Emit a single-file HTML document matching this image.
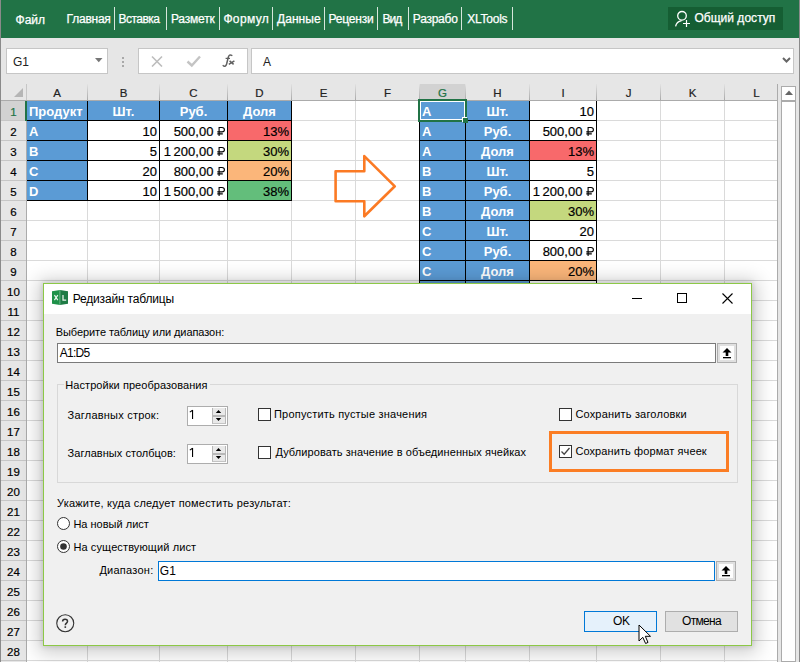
<!DOCTYPE html><html><head><meta charset="utf-8"><style>
*{margin:0;padding:0;box-sizing:border-box}
html,body{width:800px;height:662px;overflow:hidden;background:#e6e6e6;position:relative;font-family:"Liberation Sans", sans-serif}
.a{position:absolute}
.t{position:absolute;white-space:nowrap;line-height:1}
.s{-webkit-text-stroke:0.2px currentColor}
.c{position:absolute;white-space:nowrap;line-height:1;font-size:12px}
</style></head><body>
<div class="a" style="left:0px;top:0px;width:800px;height:38px;background:#217346"></div>
<div class="t" style="left:15.60px;top:14px;font-size:12px;color:#fff;font-weight:normal;letter-spacing:-0.067px;-webkit-text-stroke:0.25px #fff">Файл</div>
<div class="t" style="left:66.60px;top:13px;font-size:12px;color:#fff;font-weight:normal;letter-spacing:-0.233px;-webkit-text-stroke:0.25px #fff">Главная</div>
<div class="t" style="left:118.40px;top:13px;font-size:12px;color:#fff;font-weight:normal;letter-spacing:-0.500px;-webkit-text-stroke:0.25px #fff">Вставка</div>
<div class="t" style="left:170.90px;top:13px;font-size:12px;color:#fff;font-weight:normal;letter-spacing:-0.183px;-webkit-text-stroke:0.25px #fff">Разметк</div>
<div class="t" style="left:223.40px;top:13px;font-size:12px;color:#fff;font-weight:normal;letter-spacing:0.360px;-webkit-text-stroke:0.25px #fff">Формул</div>
<div class="t" style="left:277.00px;top:13px;font-size:12px;color:#fff;font-weight:normal;letter-spacing:0.040px;-webkit-text-stroke:0.25px #fff">Данные</div>
<div class="t" style="left:328.50px;top:13px;font-size:12px;color:#fff;font-weight:normal;letter-spacing:-0.208px;-webkit-text-stroke:0.25px #fff">Рецензи</div>
<div class="t" style="left:382.40px;top:13px;font-size:12px;color:#fff;font-weight:normal;letter-spacing:-0.875px;-webkit-text-stroke:0.25px #fff">Вид</div>
<div class="t" style="left:412.80px;top:13px;font-size:12px;color:#fff;font-weight:normal;letter-spacing:-0.250px;-webkit-text-stroke:0.25px #fff">Разрабо</div>
<div class="t" style="left:467.20px;top:13px;font-size:12px;color:#fff;font-weight:normal;letter-spacing:-0.233px;-webkit-text-stroke:0.25px #fff">XLTools</div>
<div class="a" style="left:114px;top:7px;width:1px;height:23px;background:#d7e6dc"></div>
<div class="a" style="left:166px;top:7px;width:1px;height:23px;background:#d7e6dc"></div>
<div class="a" style="left:219px;top:7px;width:1px;height:23px;background:#d7e6dc"></div>
<div class="a" style="left:272px;top:7px;width:1px;height:23px;background:#d7e6dc"></div>
<div class="a" style="left:324px;top:7px;width:1px;height:23px;background:#d7e6dc"></div>
<div class="a" style="left:377px;top:7px;width:1px;height:23px;background:#d7e6dc"></div>
<div class="a" style="left:408px;top:7px;width:1px;height:23px;background:#d7e6dc"></div>
<div class="a" style="left:461px;top:7px;width:1px;height:23px;background:#d7e6dc"></div>
<div class="a" style="left:512px;top:7px;width:1px;height:23px;background:#d7e6dc"></div>
<div class="a" style="left:668px;top:7px;width:115px;height:23px;background:#155e33"></div>
<div class="t" style="left:694.40px;top:12px;font-size:12px;color:#fff;font-weight:normal;letter-spacing:0.027px;-webkit-text-stroke:0.25px #fff">Общий доступ</div>
<svg class="a" style="left:673px;top:10px" width="20" height="18" viewBox="0 0 20 18"><circle cx="9" cy="5.8" r="4.3" fill="none" stroke="#fff" stroke-width="1.3"/><path d="M2.6 16.4 C3.2 13.2 5.5 11.2 8.6 10.6" fill="none" stroke="#fff" stroke-width="1.3"/><path d="M13.5 10 V17 M10 13.5 H17" stroke="#fff" stroke-width="1.2"/></svg>
<div class="a" style="left:0px;top:0px;width:1px;height:662px;background:#8a8a8a"></div>
<div class="a" style="left:799px;top:0px;width:1px;height:662px;background:#8a8a8a"></div>
<div class="a" style="left:6px;top:48px;width:102px;height:26px;background:#fff;border:1px solid #c6c6c6"></div>
<div class="t" style="left:13px;top:56px;font-size:12px;color:#222;font-weight:normal;letter-spacing:0px;">G1</div>
<svg class="a" style="left:95px;top:58px" width="8" height="5"><path d="M0 0 H7.5 L3.75 4.2 Z" fill="#777"/></svg>
<div class="a" style="left:122px;top:57px;width:2px;height:2px;background:#a8a8a8"></div>
<div class="a" style="left:122px;top:61px;width:2px;height:2px;background:#a8a8a8"></div>
<div class="a" style="left:122px;top:65px;width:2px;height:2px;background:#a8a8a8"></div>
<div class="a" style="left:138px;top:48px;width:110px;height:26px;background:#fff;border:1px solid #c6c6c6"></div>
<svg class="a" style="left:150px;top:55px" width="14" height="12"><path d="M2 1.5 L12 11.5 M12 1.5 L2 11.5" stroke="#bdbdbd" stroke-width="1.6"/></svg>
<svg class="a" style="left:186px;top:55px" width="16" height="13"><path d="M1.5 6.5 L5.8 10.5 L14 1.5" fill="none" stroke="#c4c4c4" stroke-width="2.4"/></svg>
<svg class="a" style="left:222px;top:53px" width="15" height="15"><path d="M1.2 12.6 C2.2 13.9 3.9 13.5 4.6 11 L6.3 4.2 C6.9 2 8 1.5 9.8 2.4" fill="none" stroke="#606060" stroke-width="1.5" stroke-linecap="round"/><path d="M3.6 5.4 H8" stroke="#606060" stroke-width="1.2"/><path d="M6.8 11.3 L12.4 7.8 M7.6 7.9 L11.6 11.4" stroke="#606060" stroke-width="1.5"/></svg>
<div class="a" style="left:251px;top:48px;width:543px;height:26px;background:#fff;border:1px solid #c6c6c6"></div>
<div class="t" style="left:263px;top:56px;font-size:12px;color:#222;font-weight:normal;letter-spacing:0px;">A</div>
<svg class="a" style="left:782px;top:57px" width="9" height="7"><path d="M1 1 L4.5 4.5 L8 1" fill="none" stroke="#666" stroke-width="2"/></svg>
<div class="a" style="left:1px;top:84px;width:777px;height:17px;background:#e6e6e6"></div>
<svg class="a" style="left:14px;top:88px" width="10" height="10"><path d="M9 0 V9 H0 Z" fill="#b5b5b5"/></svg>
<div class="a" style="left:420px;top:84px;width:45px;height:16px;background:#d2d2d2"></div>
<div class="a" style="left:87px;top:84px;width:1px;height:16px;background:linear-gradient(#e2e2e2,#a9a9a9)"></div>
<div class="t s" style="left:27px;top:88px;width:60px;text-align:center;font-size:11.5px;color:#222">A</div>
<div class="a" style="left:159px;top:84px;width:1px;height:16px;background:linear-gradient(#e2e2e2,#a9a9a9)"></div>
<div class="t s" style="left:88px;top:88px;width:71px;text-align:center;font-size:11.5px;color:#222">B</div>
<div class="a" style="left:227px;top:84px;width:1px;height:16px;background:linear-gradient(#e2e2e2,#a9a9a9)"></div>
<div class="t s" style="left:160px;top:88px;width:67px;text-align:center;font-size:11.5px;color:#222">C</div>
<div class="a" style="left:291px;top:84px;width:1px;height:16px;background:linear-gradient(#e2e2e2,#a9a9a9)"></div>
<div class="t s" style="left:228px;top:88px;width:63px;text-align:center;font-size:11.5px;color:#222">D</div>
<div class="a" style="left:355px;top:84px;width:1px;height:16px;background:linear-gradient(#e2e2e2,#a9a9a9)"></div>
<div class="t s" style="left:292px;top:88px;width:63px;text-align:center;font-size:11.5px;color:#222">E</div>
<div class="a" style="left:419px;top:84px;width:1px;height:16px;background:linear-gradient(#e2e2e2,#a9a9a9)"></div>
<div class="t s" style="left:356px;top:88px;width:63px;text-align:center;font-size:11.5px;color:#222">F</div>
<div class="a" style="left:465px;top:84px;width:1px;height:16px;background:linear-gradient(#e2e2e2,#a9a9a9)"></div>
<div class="t s" style="left:420px;top:88px;width:45px;text-align:center;font-size:11.5px;color:#217346">G</div>
<div class="a" style="left:529px;top:84px;width:1px;height:16px;background:linear-gradient(#e2e2e2,#a9a9a9)"></div>
<div class="t s" style="left:466px;top:88px;width:63px;text-align:center;font-size:11.5px;color:#222">H</div>
<div class="a" style="left:596px;top:84px;width:1px;height:16px;background:linear-gradient(#e2e2e2,#a9a9a9)"></div>
<div class="t s" style="left:530px;top:88px;width:66px;text-align:center;font-size:11.5px;color:#222">I</div>
<div class="a" style="left:660px;top:84px;width:1px;height:16px;background:linear-gradient(#e2e2e2,#a9a9a9)"></div>
<div class="t s" style="left:597px;top:88px;width:63px;text-align:center;font-size:11.5px;color:#222">J</div>
<div class="a" style="left:724px;top:84px;width:1px;height:16px;background:linear-gradient(#e2e2e2,#a9a9a9)"></div>
<div class="t s" style="left:661px;top:88px;width:63px;text-align:center;font-size:11.5px;color:#222">K</div>
<div class="a" style="left:777px;top:84px;width:1px;height:16px;background:linear-gradient(#e2e2e2,#a9a9a9)"></div>
<div class="t s" style="left:725px;top:88px;width:63px;text-align:center;font-size:11.5px;color:#222">L</div>
<div class="a" style="left:26px;top:84px;width:1px;height:16px;background:#c6c6c6"></div>
<div class="a" style="left:1px;top:100px;width:777px;height:1px;background:#ababab"></div>
<div class="a" style="left:27px;top:101px;width:750px;height:561px;background:#fff"></div>
<div class="a" style="left:27px;top:120px;width:750px;height:1px;background:#dadada"></div>
<div class="a" style="left:27px;top:140px;width:750px;height:1px;background:#dadada"></div>
<div class="a" style="left:27px;top:160px;width:750px;height:1px;background:#dadada"></div>
<div class="a" style="left:27px;top:180px;width:750px;height:1px;background:#dadada"></div>
<div class="a" style="left:27px;top:200px;width:750px;height:1px;background:#dadada"></div>
<div class="a" style="left:27px;top:220px;width:750px;height:1px;background:#dadada"></div>
<div class="a" style="left:27px;top:240px;width:750px;height:1px;background:#dadada"></div>
<div class="a" style="left:27px;top:260px;width:750px;height:1px;background:#dadada"></div>
<div class="a" style="left:27px;top:280px;width:750px;height:1px;background:#dadada"></div>
<div class="a" style="left:27px;top:300px;width:750px;height:1px;background:#dadada"></div>
<div class="a" style="left:27px;top:320px;width:750px;height:1px;background:#dadada"></div>
<div class="a" style="left:27px;top:340px;width:750px;height:1px;background:#dadada"></div>
<div class="a" style="left:27px;top:360px;width:750px;height:1px;background:#dadada"></div>
<div class="a" style="left:27px;top:380px;width:750px;height:1px;background:#dadada"></div>
<div class="a" style="left:27px;top:400px;width:750px;height:1px;background:#dadada"></div>
<div class="a" style="left:27px;top:420px;width:750px;height:1px;background:#dadada"></div>
<div class="a" style="left:27px;top:440px;width:750px;height:1px;background:#dadada"></div>
<div class="a" style="left:27px;top:460px;width:750px;height:1px;background:#dadada"></div>
<div class="a" style="left:27px;top:480px;width:750px;height:1px;background:#dadada"></div>
<div class="a" style="left:27px;top:500px;width:750px;height:1px;background:#dadada"></div>
<div class="a" style="left:27px;top:520px;width:750px;height:1px;background:#dadada"></div>
<div class="a" style="left:27px;top:540px;width:750px;height:1px;background:#dadada"></div>
<div class="a" style="left:27px;top:560px;width:750px;height:1px;background:#dadada"></div>
<div class="a" style="left:27px;top:580px;width:750px;height:1px;background:#dadada"></div>
<div class="a" style="left:27px;top:600px;width:750px;height:1px;background:#dadada"></div>
<div class="a" style="left:27px;top:620px;width:750px;height:1px;background:#dadada"></div>
<div class="a" style="left:27px;top:640px;width:750px;height:1px;background:#dadada"></div>
<div class="a" style="left:27px;top:660px;width:750px;height:1px;background:#dadada"></div>
<div class="a" style="left:87px;top:101px;width:1px;height:561px;background:#dadada"></div>
<div class="a" style="left:159px;top:101px;width:1px;height:561px;background:#dadada"></div>
<div class="a" style="left:227px;top:101px;width:1px;height:561px;background:#dadada"></div>
<div class="a" style="left:291px;top:101px;width:1px;height:561px;background:#dadada"></div>
<div class="a" style="left:355px;top:101px;width:1px;height:561px;background:#dadada"></div>
<div class="a" style="left:419px;top:101px;width:1px;height:561px;background:#dadada"></div>
<div class="a" style="left:465px;top:101px;width:1px;height:561px;background:#dadada"></div>
<div class="a" style="left:529px;top:101px;width:1px;height:561px;background:#dadada"></div>
<div class="a" style="left:596px;top:101px;width:1px;height:561px;background:#dadada"></div>
<div class="a" style="left:660px;top:101px;width:1px;height:561px;background:#dadada"></div>
<div class="a" style="left:724px;top:101px;width:1px;height:561px;background:#dadada"></div>
<div class="a" style="left:777px;top:84px;width:1px;height:578px;background:#ababab"></div>
<div class="a" style="left:1px;top:101px;width:25px;height:19px;background:#d2d2d2"></div>
<div class="a" style="left:1px;top:120px;width:25px;height:1px;background:#c6c6c6"></div>
<div class="t s" style="left:1px;top:107px;width:25px;text-align:center;font-size:11.5px;color:#217346">1</div>
<div class="a" style="left:1px;top:121px;width:25px;height:19px;background:#e6e6e6"></div>
<div class="a" style="left:1px;top:140px;width:25px;height:1px;background:#c6c6c6"></div>
<div class="t s" style="left:1px;top:127px;width:25px;text-align:center;font-size:11.5px;color:#000">2</div>
<div class="a" style="left:1px;top:141px;width:25px;height:19px;background:#e6e6e6"></div>
<div class="a" style="left:1px;top:160px;width:25px;height:1px;background:#c6c6c6"></div>
<div class="t s" style="left:1px;top:147px;width:25px;text-align:center;font-size:11.5px;color:#000">3</div>
<div class="a" style="left:1px;top:161px;width:25px;height:19px;background:#e6e6e6"></div>
<div class="a" style="left:1px;top:180px;width:25px;height:1px;background:#c6c6c6"></div>
<div class="t s" style="left:1px;top:167px;width:25px;text-align:center;font-size:11.5px;color:#000">4</div>
<div class="a" style="left:1px;top:181px;width:25px;height:19px;background:#e6e6e6"></div>
<div class="a" style="left:1px;top:200px;width:25px;height:1px;background:#c6c6c6"></div>
<div class="t s" style="left:1px;top:187px;width:25px;text-align:center;font-size:11.5px;color:#000">5</div>
<div class="a" style="left:1px;top:201px;width:25px;height:19px;background:#e6e6e6"></div>
<div class="a" style="left:1px;top:220px;width:25px;height:1px;background:#c6c6c6"></div>
<div class="t s" style="left:1px;top:207px;width:25px;text-align:center;font-size:11.5px;color:#000">6</div>
<div class="a" style="left:1px;top:221px;width:25px;height:19px;background:#e6e6e6"></div>
<div class="a" style="left:1px;top:240px;width:25px;height:1px;background:#c6c6c6"></div>
<div class="t s" style="left:1px;top:227px;width:25px;text-align:center;font-size:11.5px;color:#000">7</div>
<div class="a" style="left:1px;top:241px;width:25px;height:19px;background:#e6e6e6"></div>
<div class="a" style="left:1px;top:260px;width:25px;height:1px;background:#c6c6c6"></div>
<div class="t s" style="left:1px;top:247px;width:25px;text-align:center;font-size:11.5px;color:#000">8</div>
<div class="a" style="left:1px;top:261px;width:25px;height:19px;background:#e6e6e6"></div>
<div class="a" style="left:1px;top:280px;width:25px;height:1px;background:#c6c6c6"></div>
<div class="t s" style="left:1px;top:267px;width:25px;text-align:center;font-size:11.5px;color:#000">9</div>
<div class="a" style="left:1px;top:281px;width:25px;height:19px;background:#e6e6e6"></div>
<div class="a" style="left:1px;top:300px;width:25px;height:1px;background:#c6c6c6"></div>
<div class="t s" style="left:1px;top:287px;width:25px;text-align:center;font-size:11.5px;color:#000">10</div>
<div class="a" style="left:1px;top:301px;width:25px;height:19px;background:#e6e6e6"></div>
<div class="a" style="left:1px;top:320px;width:25px;height:1px;background:#c6c6c6"></div>
<div class="t s" style="left:1px;top:307px;width:25px;text-align:center;font-size:11.5px;color:#000">11</div>
<div class="a" style="left:1px;top:321px;width:25px;height:19px;background:#e6e6e6"></div>
<div class="a" style="left:1px;top:340px;width:25px;height:1px;background:#c6c6c6"></div>
<div class="t s" style="left:1px;top:327px;width:25px;text-align:center;font-size:11.5px;color:#000">12</div>
<div class="a" style="left:1px;top:341px;width:25px;height:19px;background:#e6e6e6"></div>
<div class="a" style="left:1px;top:360px;width:25px;height:1px;background:#c6c6c6"></div>
<div class="t s" style="left:1px;top:347px;width:25px;text-align:center;font-size:11.5px;color:#000">13</div>
<div class="a" style="left:1px;top:361px;width:25px;height:19px;background:#e6e6e6"></div>
<div class="a" style="left:1px;top:380px;width:25px;height:1px;background:#c6c6c6"></div>
<div class="t s" style="left:1px;top:367px;width:25px;text-align:center;font-size:11.5px;color:#000">14</div>
<div class="a" style="left:1px;top:381px;width:25px;height:19px;background:#e6e6e6"></div>
<div class="a" style="left:1px;top:400px;width:25px;height:1px;background:#c6c6c6"></div>
<div class="t s" style="left:1px;top:387px;width:25px;text-align:center;font-size:11.5px;color:#000">15</div>
<div class="a" style="left:1px;top:401px;width:25px;height:19px;background:#e6e6e6"></div>
<div class="a" style="left:1px;top:420px;width:25px;height:1px;background:#c6c6c6"></div>
<div class="t s" style="left:1px;top:407px;width:25px;text-align:center;font-size:11.5px;color:#000">16</div>
<div class="a" style="left:1px;top:421px;width:25px;height:19px;background:#e6e6e6"></div>
<div class="a" style="left:1px;top:440px;width:25px;height:1px;background:#c6c6c6"></div>
<div class="t s" style="left:1px;top:427px;width:25px;text-align:center;font-size:11.5px;color:#000">17</div>
<div class="a" style="left:1px;top:441px;width:25px;height:19px;background:#e6e6e6"></div>
<div class="a" style="left:1px;top:460px;width:25px;height:1px;background:#c6c6c6"></div>
<div class="t s" style="left:1px;top:447px;width:25px;text-align:center;font-size:11.5px;color:#000">18</div>
<div class="a" style="left:1px;top:461px;width:25px;height:19px;background:#e6e6e6"></div>
<div class="a" style="left:1px;top:480px;width:25px;height:1px;background:#c6c6c6"></div>
<div class="t s" style="left:1px;top:467px;width:25px;text-align:center;font-size:11.5px;color:#000">19</div>
<div class="a" style="left:1px;top:481px;width:25px;height:19px;background:#e6e6e6"></div>
<div class="a" style="left:1px;top:500px;width:25px;height:1px;background:#c6c6c6"></div>
<div class="t s" style="left:1px;top:487px;width:25px;text-align:center;font-size:11.5px;color:#000">20</div>
<div class="a" style="left:1px;top:501px;width:25px;height:19px;background:#e6e6e6"></div>
<div class="a" style="left:1px;top:520px;width:25px;height:1px;background:#c6c6c6"></div>
<div class="t s" style="left:1px;top:507px;width:25px;text-align:center;font-size:11.5px;color:#000">21</div>
<div class="a" style="left:1px;top:521px;width:25px;height:19px;background:#e6e6e6"></div>
<div class="a" style="left:1px;top:540px;width:25px;height:1px;background:#c6c6c6"></div>
<div class="t s" style="left:1px;top:527px;width:25px;text-align:center;font-size:11.5px;color:#000">22</div>
<div class="a" style="left:1px;top:541px;width:25px;height:19px;background:#e6e6e6"></div>
<div class="a" style="left:1px;top:560px;width:25px;height:1px;background:#c6c6c6"></div>
<div class="t s" style="left:1px;top:547px;width:25px;text-align:center;font-size:11.5px;color:#000">23</div>
<div class="a" style="left:1px;top:561px;width:25px;height:19px;background:#e6e6e6"></div>
<div class="a" style="left:1px;top:580px;width:25px;height:1px;background:#c6c6c6"></div>
<div class="t s" style="left:1px;top:567px;width:25px;text-align:center;font-size:11.5px;color:#000">24</div>
<div class="a" style="left:1px;top:581px;width:25px;height:19px;background:#e6e6e6"></div>
<div class="a" style="left:1px;top:600px;width:25px;height:1px;background:#c6c6c6"></div>
<div class="t s" style="left:1px;top:587px;width:25px;text-align:center;font-size:11.5px;color:#000">25</div>
<div class="a" style="left:1px;top:601px;width:25px;height:19px;background:#e6e6e6"></div>
<div class="a" style="left:1px;top:620px;width:25px;height:1px;background:#c6c6c6"></div>
<div class="t s" style="left:1px;top:607px;width:25px;text-align:center;font-size:11.5px;color:#000">26</div>
<div class="a" style="left:1px;top:621px;width:25px;height:19px;background:#e6e6e6"></div>
<div class="a" style="left:1px;top:640px;width:25px;height:1px;background:#c6c6c6"></div>
<div class="t s" style="left:1px;top:627px;width:25px;text-align:center;font-size:11.5px;color:#000">27</div>
<div class="a" style="left:1px;top:641px;width:25px;height:19px;background:#e6e6e6"></div>
<div class="a" style="left:1px;top:660px;width:25px;height:1px;background:#c6c6c6"></div>
<div class="t s" style="left:1px;top:647px;width:25px;text-align:center;font-size:11.5px;color:#000">28</div>
<div class="a" style="left:26px;top:101px;width:1px;height:561px;background:#ababab"></div>
<div class="a" style="left:25px;top:100px;width:2px;height:21px;background:#217346"></div>
<div class="a" style="left:27px;top:101px;width:60px;height:19px;background:#5b9bd5"></div>
<div class="t" style="left:29px;top:105px;font-size:13px;font-weight:bold;color:#fff">Продукт</div>
<div class="a" style="left:88px;top:101px;width:71px;height:19px;background:#5b9bd5"></div>
<div class="t" style="left:88px;width:71px;text-align:center;top:105px;font-size:13px;font-weight:bold;color:#fff">Шт.</div>
<div class="a" style="left:160px;top:101px;width:67px;height:19px;background:#5b9bd5"></div>
<div class="t" style="left:160px;width:67px;text-align:center;top:105px;font-size:13px;font-weight:bold;color:#fff">Руб.</div>
<div class="a" style="left:228px;top:101px;width:63px;height:19px;background:#5b9bd5"></div>
<div class="t" style="left:228px;width:63px;text-align:center;top:105px;font-size:13px;font-weight:bold;color:#fff">Доля</div>
<div class="a" style="left:27px;top:121px;width:60px;height:19px;background:#5b9bd5"></div>
<div class="t" style="left:29px;top:125px;font-size:13px;font-weight:bold;color:#fff">A</div>
<div class="t s" style="left:88px;width:69px;text-align:right;top:125px;font-size:13px;font-weight:normal;color:#000">10</div>
<div class="t s" style="left:160px;width:65px;text-align:right;top:125px;font-size:13px;font-weight:normal;color:#000">500,00 <svg width="8" height="9" viewBox="0 0 8 9" style="margin-left:0px"><path d="M2.1 0 V9 M2.1 0.55 H5 C6.6 0.55 7.4 1.5 7.4 2.7 C7.4 3.9 6.6 4.85 5 4.85 H0.3 M0.3 6.9 H5.8" fill="none" stroke="#000" stroke-width="1.1"/></svg></div>
<div class="a" style="left:228px;top:121px;width:63px;height:19px;background:#f8696b"></div>
<div class="t s" style="left:228px;width:61px;text-align:right;top:125px;font-size:13px;font-weight:normal;color:#000">13%</div>
<div class="a" style="left:27px;top:141px;width:60px;height:19px;background:#5b9bd5"></div>
<div class="t" style="left:29px;top:145px;font-size:13px;font-weight:bold;color:#fff">B</div>
<div class="t s" style="left:88px;width:69px;text-align:right;top:145px;font-size:13px;font-weight:normal;color:#000">5</div>
<div class="t s" style="left:160px;width:65px;text-align:right;top:145px;font-size:13px;font-weight:normal;color:#000">1&#8201;200,00 <svg width="8" height="9" viewBox="0 0 8 9" style="margin-left:0px"><path d="M2.1 0 V9 M2.1 0.55 H5 C6.6 0.55 7.4 1.5 7.4 2.7 C7.4 3.9 6.6 4.85 5 4.85 H0.3 M0.3 6.9 H5.8" fill="none" stroke="#000" stroke-width="1.1"/></svg></div>
<div class="a" style="left:228px;top:141px;width:63px;height:19px;background:#c4d87e"></div>
<div class="t s" style="left:228px;width:61px;text-align:right;top:145px;font-size:13px;font-weight:normal;color:#000">30%</div>
<div class="a" style="left:27px;top:161px;width:60px;height:19px;background:#5b9bd5"></div>
<div class="t" style="left:29px;top:165px;font-size:13px;font-weight:bold;color:#fff">C</div>
<div class="t s" style="left:88px;width:69px;text-align:right;top:165px;font-size:13px;font-weight:normal;color:#000">20</div>
<div class="t s" style="left:160px;width:65px;text-align:right;top:165px;font-size:13px;font-weight:normal;color:#000">800,00 <svg width="8" height="9" viewBox="0 0 8 9" style="margin-left:0px"><path d="M2.1 0 V9 M2.1 0.55 H5 C6.6 0.55 7.4 1.5 7.4 2.7 C7.4 3.9 6.6 4.85 5 4.85 H0.3 M0.3 6.9 H5.8" fill="none" stroke="#000" stroke-width="1.1"/></svg></div>
<div class="a" style="left:228px;top:161px;width:63px;height:19px;background:#fbb67a"></div>
<div class="t s" style="left:228px;width:61px;text-align:right;top:165px;font-size:13px;font-weight:normal;color:#000">20%</div>
<div class="a" style="left:27px;top:181px;width:60px;height:19px;background:#5b9bd5"></div>
<div class="t" style="left:29px;top:185px;font-size:13px;font-weight:bold;color:#fff">D</div>
<div class="t s" style="left:88px;width:69px;text-align:right;top:185px;font-size:13px;font-weight:normal;color:#000">10</div>
<div class="t s" style="left:160px;width:65px;text-align:right;top:185px;font-size:13px;font-weight:normal;color:#000">1&#8201;500,00 <svg width="8" height="9" viewBox="0 0 8 9" style="margin-left:0px"><path d="M2.1 0 V9 M2.1 0.55 H5 C6.6 0.55 7.4 1.5 7.4 2.7 C7.4 3.9 6.6 4.85 5 4.85 H0.3 M0.3 6.9 H5.8" fill="none" stroke="#000" stroke-width="1.1"/></svg></div>
<div class="a" style="left:228px;top:181px;width:63px;height:19px;background:#63be7b"></div>
<div class="t s" style="left:228px;width:61px;text-align:right;top:185px;font-size:13px;font-weight:normal;color:#000">38%</div>
<div class="a" style="left:26px;top:100px;width:266px;height:1px;background:#000"></div>
<div class="a" style="left:26px;top:120px;width:266px;height:1px;background:#000"></div>
<div class="a" style="left:26px;top:140px;width:266px;height:1px;background:#000"></div>
<div class="a" style="left:26px;top:160px;width:266px;height:1px;background:#000"></div>
<div class="a" style="left:26px;top:180px;width:266px;height:1px;background:#000"></div>
<div class="a" style="left:26px;top:200px;width:266px;height:1px;background:#000"></div>
<div class="a" style="left:26px;top:100px;width:1px;height:101px;background:#000"></div>
<div class="a" style="left:87px;top:100px;width:1px;height:101px;background:#000"></div>
<div class="a" style="left:159px;top:100px;width:1px;height:101px;background:#000"></div>
<div class="a" style="left:227px;top:100px;width:1px;height:101px;background:#000"></div>
<div class="a" style="left:291px;top:100px;width:1px;height:101px;background:#000"></div>
<div class="a" style="left:420px;top:101px;width:45px;height:19px;background:#5b9bd5"></div>
<div class="t" style="left:422px;top:105px;font-size:13px;font-weight:bold;color:#fff">A</div>
<div class="a" style="left:466px;top:101px;width:63px;height:19px;background:#5b9bd5"></div>
<div class="t" style="left:466px;width:63px;text-align:center;top:105px;font-size:13px;font-weight:bold;color:#fff">Шт.</div>
<div class="t s" style="left:530px;width:64px;text-align:right;top:105px;font-size:13px;font-weight:normal;color:#000">10</div>
<div class="a" style="left:420px;top:121px;width:45px;height:19px;background:#5b9bd5"></div>
<div class="t" style="left:422px;top:125px;font-size:13px;font-weight:bold;color:#fff">A</div>
<div class="a" style="left:466px;top:121px;width:63px;height:19px;background:#5b9bd5"></div>
<div class="t" style="left:466px;width:63px;text-align:center;top:125px;font-size:13px;font-weight:bold;color:#fff">Руб.</div>
<div class="t s" style="left:530px;width:64px;text-align:right;top:125px;font-size:13px;font-weight:normal;color:#000">500,00 <svg width="8" height="9" viewBox="0 0 8 9" style="margin-left:0px"><path d="M2.1 0 V9 M2.1 0.55 H5 C6.6 0.55 7.4 1.5 7.4 2.7 C7.4 3.9 6.6 4.85 5 4.85 H0.3 M0.3 6.9 H5.8" fill="none" stroke="#000" stroke-width="1.1"/></svg></div>
<div class="a" style="left:420px;top:141px;width:45px;height:19px;background:#5b9bd5"></div>
<div class="t" style="left:422px;top:145px;font-size:13px;font-weight:bold;color:#fff">A</div>
<div class="a" style="left:466px;top:141px;width:63px;height:19px;background:#5b9bd5"></div>
<div class="t" style="left:466px;width:63px;text-align:center;top:145px;font-size:13px;font-weight:bold;color:#fff">Доля</div>
<div class="a" style="left:530px;top:141px;width:66px;height:19px;background:#f8696b"></div>
<div class="t s" style="left:530px;width:64px;text-align:right;top:145px;font-size:13px;font-weight:normal;color:#000">13%</div>
<div class="a" style="left:420px;top:161px;width:45px;height:19px;background:#5b9bd5"></div>
<div class="t" style="left:422px;top:165px;font-size:13px;font-weight:bold;color:#fff">B</div>
<div class="a" style="left:466px;top:161px;width:63px;height:19px;background:#5b9bd5"></div>
<div class="t" style="left:466px;width:63px;text-align:center;top:165px;font-size:13px;font-weight:bold;color:#fff">Шт.</div>
<div class="t s" style="left:530px;width:64px;text-align:right;top:165px;font-size:13px;font-weight:normal;color:#000">5</div>
<div class="a" style="left:420px;top:181px;width:45px;height:19px;background:#5b9bd5"></div>
<div class="t" style="left:422px;top:185px;font-size:13px;font-weight:bold;color:#fff">B</div>
<div class="a" style="left:466px;top:181px;width:63px;height:19px;background:#5b9bd5"></div>
<div class="t" style="left:466px;width:63px;text-align:center;top:185px;font-size:13px;font-weight:bold;color:#fff">Руб.</div>
<div class="t s" style="left:530px;width:64px;text-align:right;top:185px;font-size:13px;font-weight:normal;color:#000">1&#8201;200,00 <svg width="8" height="9" viewBox="0 0 8 9" style="margin-left:0px"><path d="M2.1 0 V9 M2.1 0.55 H5 C6.6 0.55 7.4 1.5 7.4 2.7 C7.4 3.9 6.6 4.85 5 4.85 H0.3 M0.3 6.9 H5.8" fill="none" stroke="#000" stroke-width="1.1"/></svg></div>
<div class="a" style="left:420px;top:201px;width:45px;height:19px;background:#5b9bd5"></div>
<div class="t" style="left:422px;top:205px;font-size:13px;font-weight:bold;color:#fff">B</div>
<div class="a" style="left:466px;top:201px;width:63px;height:19px;background:#5b9bd5"></div>
<div class="t" style="left:466px;width:63px;text-align:center;top:205px;font-size:13px;font-weight:bold;color:#fff">Доля</div>
<div class="a" style="left:530px;top:201px;width:66px;height:19px;background:#c4d87e"></div>
<div class="t s" style="left:530px;width:64px;text-align:right;top:205px;font-size:13px;font-weight:normal;color:#000">30%</div>
<div class="a" style="left:420px;top:221px;width:45px;height:19px;background:#5b9bd5"></div>
<div class="t" style="left:422px;top:225px;font-size:13px;font-weight:bold;color:#fff">C</div>
<div class="a" style="left:466px;top:221px;width:63px;height:19px;background:#5b9bd5"></div>
<div class="t" style="left:466px;width:63px;text-align:center;top:225px;font-size:13px;font-weight:bold;color:#fff">Шт.</div>
<div class="t s" style="left:530px;width:64px;text-align:right;top:225px;font-size:13px;font-weight:normal;color:#000">20</div>
<div class="a" style="left:420px;top:241px;width:45px;height:19px;background:#5b9bd5"></div>
<div class="t" style="left:422px;top:245px;font-size:13px;font-weight:bold;color:#fff">C</div>
<div class="a" style="left:466px;top:241px;width:63px;height:19px;background:#5b9bd5"></div>
<div class="t" style="left:466px;width:63px;text-align:center;top:245px;font-size:13px;font-weight:bold;color:#fff">Руб.</div>
<div class="t s" style="left:530px;width:64px;text-align:right;top:245px;font-size:13px;font-weight:normal;color:#000">800,00 <svg width="8" height="9" viewBox="0 0 8 9" style="margin-left:0px"><path d="M2.1 0 V9 M2.1 0.55 H5 C6.6 0.55 7.4 1.5 7.4 2.7 C7.4 3.9 6.6 4.85 5 4.85 H0.3 M0.3 6.9 H5.8" fill="none" stroke="#000" stroke-width="1.1"/></svg></div>
<div class="a" style="left:420px;top:261px;width:45px;height:19px;background:#5b9bd5"></div>
<div class="t" style="left:422px;top:265px;font-size:13px;font-weight:bold;color:#fff">C</div>
<div class="a" style="left:466px;top:261px;width:63px;height:19px;background:#5b9bd5"></div>
<div class="t" style="left:466px;width:63px;text-align:center;top:265px;font-size:13px;font-weight:bold;color:#fff">Доля</div>
<div class="a" style="left:530px;top:261px;width:66px;height:19px;background:#fbb67a"></div>
<div class="t s" style="left:530px;width:64px;text-align:right;top:265px;font-size:13px;font-weight:normal;color:#000">20%</div>
<div class="a" style="left:420px;top:281px;width:45px;height:19px;background:#5b9bd5"></div>
<div class="t" style="left:422px;top:285px;font-size:13px;font-weight:bold;color:#fff">D</div>
<div class="a" style="left:466px;top:281px;width:63px;height:19px;background:#5b9bd5"></div>
<div class="t" style="left:466px;width:63px;text-align:center;top:285px;font-size:13px;font-weight:bold;color:#fff">Шт.</div>
<div class="t s" style="left:530px;width:64px;text-align:right;top:285px;font-size:13px;font-weight:normal;color:#000">10</div>
<div class="a" style="left:419px;top:100px;width:178px;height:1px;background:#000"></div>
<div class="a" style="left:419px;top:120px;width:178px;height:1px;background:#000"></div>
<div class="a" style="left:419px;top:140px;width:178px;height:1px;background:#000"></div>
<div class="a" style="left:419px;top:160px;width:178px;height:1px;background:#000"></div>
<div class="a" style="left:419px;top:180px;width:178px;height:1px;background:#000"></div>
<div class="a" style="left:419px;top:200px;width:178px;height:1px;background:#000"></div>
<div class="a" style="left:419px;top:220px;width:178px;height:1px;background:#000"></div>
<div class="a" style="left:419px;top:240px;width:178px;height:1px;background:#000"></div>
<div class="a" style="left:419px;top:260px;width:178px;height:1px;background:#000"></div>
<div class="a" style="left:419px;top:280px;width:178px;height:1px;background:#000"></div>
<div class="a" style="left:419px;top:300px;width:178px;height:1px;background:#000"></div>
<div class="a" style="left:419px;top:100px;width:1px;height:201px;background:#000"></div>
<div class="a" style="left:465px;top:100px;width:1px;height:201px;background:#000"></div>
<div class="a" style="left:529px;top:100px;width:1px;height:201px;background:#000"></div>
<div class="a" style="left:596px;top:100px;width:1px;height:201px;background:#000"></div>
<div class="a" style="left:26px;top:101px;width:1px;height:561px;background:#ababab"></div>
<div class="a" style="left:25px;top:100px;width:2px;height:21px;background:#217346"></div>
<div class="a" style="left:1px;top:100px;width:777px;height:1px;background:#ababab"></div>
<div class="a" style="left:418px;top:99px;width:49px;height:23px;border:2px solid #217346"></div>
<div class="a" style="left:420px;top:101px;width:45px;height:19px;border:1px solid #fff"></div>
<div class="a" style="left:463px;top:118px;width:5px;height:5px;background:#217346;box-shadow:-1px -1px 0 #fff"></div>
<svg class="a" style="left:0;top:0" width="800" height="662"><path d="M335.6 171.3 H364.3 V156.1 L394.8 186.3 L364.3 216.3 V201.2 H335.6 Z" fill="none" stroke="#fb7a24" stroke-width="2.6" stroke-linejoin="round"/></svg>
<div class="a" style="left:778px;top:84px;width:21px;height:578px;background:#e6e6e6"></div>
<div class="a" style="left:781px;top:86px;width:15px;height:576px;background:#fff;border:1px solid #ababab"></div>
<div class="a" style="left:781px;top:100px;width:15px;height:2px;background:#ababab"></div>
<svg class="a" style="left:785px;top:90px" width="8" height="5"><path d="M0 5 L4 0.5 L8 5 Z" fill="#666"/></svg>
<div class="a" style="left:43px;top:283px;width:709px;height:363px;box-shadow:0 0 5px 1px rgba(0,0,0,0.12), 0 2px 18px 5px rgba(0,0,0,0.2)"></div>
<div class="a" style="left:43px;top:283px;width:709px;height:363px;background:#f0f0f0;border:1px solid #8cc846"></div>
<div class="a" style="left:44px;top:284px;width:707px;height:30px;background:#fff"></div>
<svg class="a" style="left:52px;top:290px" width="16" height="15" viewBox="0 0 16 15"><path d="M0 1.2 L8 0 V15 L0 13.8 Z" fill="#1f9149"/><path d="M8 0 L16 1.2 V13.8 L8 15 Z" fill="#1e7b45"/><rect x="7" y="0" width="1.6" height="15" fill="#4fa56f"/><path d="M2.4 5.2 L5.8 10.2 M5.8 5.2 L2.4 10.2" stroke="#e8f3ec" stroke-width="1.25"/><path d="M11 5 V10 H14.2" fill="none" stroke="#e8f3ec" stroke-width="1.25"/></svg>
<div class="t" style="left:72.70px;top:293px;font-size:12px;color:#000;font-weight:normal;letter-spacing:-0.167px;">Редизайн таблицы</div>
<svg class="a" style="left:620px;top:284px" width="130" height="30"><path d="M12 14.5 H22" stroke="#000" stroke-width="1"/><rect x="57.5" y="9.5" width="9" height="9" fill="none" stroke="#000" stroke-width="1"/><path d="M102.5 9.5 L112.5 19.5 M112.5 9.5 L102.5 19.5" stroke="#000" stroke-width="1.1"/></svg>
<div class="t" style="left:55.75px;top:327px;font-size:11px;color:#000;font-weight:normal;letter-spacing:-0.078px;">Выберите таблицу или диапазон:</div>
<div class="a" style="left:57px;top:343px;width:659px;height:20px;background:#fff;border:1px solid #7a7a7a"></div>
<div class="t" style="left:59.80px;top:347px;font-size:12px;color:#000;font-weight:normal;letter-spacing:-0.750px;">A1:D5</div>
<div class="a" style="left:717px;top:343px;width:20px;height:20px;background:#fdfdfd;border:1px solid #adadad;box-shadow:inset 0 0 0 2px #e0e0e0"></div>
<svg class="a" style="left:722px;top:348px" width="10" height="11"><path d="M5 0 L9.5 4.5 H6.3 V8 H3.7 V4.5 H0.5 Z" fill="#000"/><rect x="1" y="9" width="8" height="1.3" fill="#000"/></svg>
<div class="a" style="left:57px;top:384px;width:681px;height:99px;border:1px solid #d8d8d8"></div>
<div class="a" style="left:64px;top:378px;width:146px;height:12px;background:#f0f0f0"></div>
<div class="t" style="left:65.30px;top:380px;font-size:11px;color:#000;font-weight:normal;letter-spacing:0.063px;">Настройки преобразования</div>
<div class="t" style="left:67.55px;top:410px;font-size:11px;color:#000;font-weight:normal;letter-spacing:0.220px;">Заглавных строк:</div>
<div class="t" style="left:67.55px;top:448px;font-size:11px;color:#000;font-weight:normal;letter-spacing:0.039px;">Заглавных столбцов:</div>
<div class="a" style="left:187px;top:406px;width:41px;height:20px;background:#fff;border:1px solid #adadad"></div>
<div class="a" style="left:212px;top:408px;width:14px;height:16px;background:#e9e9e9;border-left:1px solid #b8b8b8;border-right:1px solid #b8b8b8;border-bottom:1px solid #c4c4c4"></div>
<div class="a" style="left:212px;top:415px;width:14px;height:2px;background:#b8b8b8"></div>
<svg class="a" style="left:215px;top:409px" width="8" height="13"><path d="M0.8 4 H6.2 L3.5 1 Z M0.8 9 H6.2 L3.5 12 Z" fill="#000"/></svg>
<svg class="a" style="left:189px;top:409px" width="6" height="11"><rect x="3" y="1" width="1.1" height="9" fill="#000"/><path d="M0.8 3.1 L3.6 1.3" stroke="#000" stroke-width="1.1"/></svg>
<div class="a" style="left:187px;top:444px;width:41px;height:20px;background:#fff;border:1px solid #adadad"></div>
<div class="a" style="left:212px;top:446px;width:14px;height:16px;background:#e9e9e9;border-left:1px solid #b8b8b8;border-right:1px solid #b8b8b8;border-bottom:1px solid #c4c4c4"></div>
<div class="a" style="left:212px;top:453px;width:14px;height:2px;background:#b8b8b8"></div>
<svg class="a" style="left:215px;top:447px" width="8" height="13"><path d="M0.8 4 H6.2 L3.5 1 Z M0.8 9 H6.2 L3.5 12 Z" fill="#000"/></svg>
<svg class="a" style="left:189px;top:447px" width="6" height="11"><rect x="3" y="1" width="1.1" height="9" fill="#000"/><path d="M0.8 3.1 L3.6 1.3" stroke="#000" stroke-width="1.1"/></svg>
<div class="a" style="left:258px;top:408px;width:13px;height:13px;background:#fff;border:1px solid #333"></div>
<div class="t" style="left:274.00px;top:409px;font-size:11px;color:#000;font-weight:normal;letter-spacing:0.200px;">Пропустить пустые значения</div>
<div class="a" style="left:258px;top:446px;width:13px;height:13px;background:#fff;border:1px solid #333"></div>
<div class="t" style="left:275.40px;top:447px;font-size:11px;color:#000;font-weight:normal;letter-spacing:0.081px;">Дублировать значение в объединенных ячейках</div>
<div class="a" style="left:559px;top:408px;width:13px;height:13px;background:#fff;border:1px solid #333"></div>
<div class="t" style="left:575.40px;top:409px;font-size:11px;color:#000;font-weight:normal;letter-spacing:0.178px;">Сохранить заголовки</div>
<div class="a" style="left:559px;top:445px;width:13px;height:13px;background:#fff;border:1px solid #333"></div>
<svg class="a" style="left:559px;top:445px" width="13" height="13"><path d="M2.5 6.5 L5.2 9.2 L10.5 3" fill="none" stroke="#444" stroke-width="1.3"/></svg>
<div class="t" style="left:575.40px;top:446px;font-size:11px;color:#000;font-weight:normal;letter-spacing:0.095px;">Сохранить формат ячеек</div>
<div class="a" style="left:549px;top:431px;width:180px;height:41px;border:3px solid #fb7d24"></div>
<div class="t" style="left:57.10px;top:498px;font-size:11px;color:#000;font-weight:normal;letter-spacing:0.188px;">Укажите, куда следует поместить результат:</div>
<svg class="a" style="left:57px;top:517px" width="13" height="13"><circle cx="6.5" cy="6.5" r="6" fill="#fff" stroke="#333" stroke-width="1"/></svg>
<div class="t" style="left:73.40px;top:519px;font-size:11px;color:#000;font-weight:normal;letter-spacing:0.008px;">На новый лист</div>
<svg class="a" style="left:57px;top:540px" width="13" height="13"><circle cx="6.5" cy="6.5" r="6" fill="#fff" stroke="#333" stroke-width="1"/><circle cx="6.5" cy="6.5" r="3.3" fill="#333"/></svg>
<div class="t" style="left:73.40px;top:542px;font-size:11px;color:#000;font-weight:normal;letter-spacing:0.116px;">На существующий лист</div>
<div class="t" style="left:99.40px;top:565px;font-size:11px;color:#000;font-weight:normal;letter-spacing:0.250px;">Диапазон:</div>
<div class="a" style="left:158px;top:561px;width:557px;height:20px;background:#fff;border:1px solid #0078d7"></div>
<div class="t" style="left:159.80px;top:565px;font-size:12px;color:#000;font-weight:normal;letter-spacing:0.000px;">G1</div>
<div class="a" style="left:716px;top:561px;width:20px;height:20px;background:#fdfdfd;border:1px solid #adadad;box-shadow:inset 0 0 0 2px #e0e0e0"></div>
<svg class="a" style="left:721px;top:566px" width="10" height="11"><path d="M5 0 L9.5 4.5 H6.3 V8 H3.7 V4.5 H0.5 Z" fill="#000"/><rect x="1" y="9" width="8" height="1.3" fill="#000"/></svg>
<svg class="a" style="left:56px;top:614px" width="19" height="19"><circle cx="9.25" cy="9.25" r="8.5" fill="none" stroke="#333" stroke-width="1.1"/><path d="M6.6 7.6 C6.6 6 7.7 5.3 9 5.3 C10.4 5.3 11.5 6.1 11.5 7.4 C11.5 9 9.3 9.3 9.3 11.2" fill="none" stroke="#333" stroke-width="1.5"/><rect x="8.5" y="12.3" width="1.6" height="1.6" fill="#333"/></svg>
<div class="a" style="left:584px;top:611px;width:73px;height:21px;background:#e5f1fb;border:1px solid #0078d7"></div>
<div class="t" style="left:613.00px;top:615px;font-size:12px;color:#000;font-weight:normal;letter-spacing:-0.400px;">OK</div>
<div class="a" style="left:665px;top:611px;width:73px;height:21px;background:#e1e1e1;border:1px solid #adadad"></div>
<div class="t" style="left:682.00px;top:615px;font-size:12px;color:#000;font-weight:normal;letter-spacing:-0.700px;">Отмена</div>
<svg class="a" style="left:638px;top:624px" width="14" height="21"><path d="M1 1 V17 L4.8 13.3 L7.6 19.5 L10 18.4 L7.3 12.3 H12.5 Z" fill="#fff" stroke="#000" stroke-width="1" stroke-linejoin="round"/></svg>
<style>.rub{position:relative;display:inline-block}.rub:after{content:"";position:absolute;left:-1px;right:2px;top:8px;height:1px;background:currentColor}</style>
</body></html>
